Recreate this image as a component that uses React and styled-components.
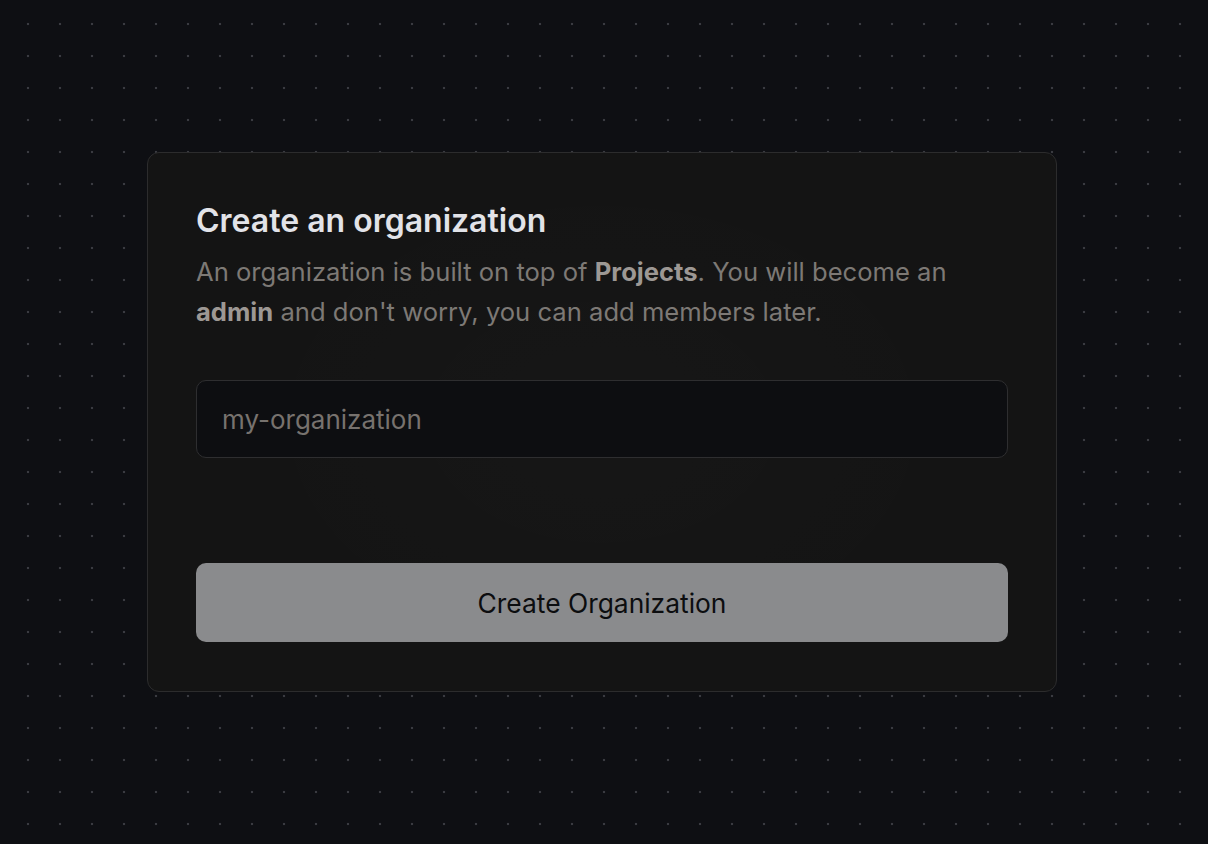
import React from "react";
import styled, { createGlobalStyle } from "styled-components";

const Global = createGlobalStyle`
  html, body { margin: 0; padding: 0; }
  body {
    background: #0e0f13;
    font-family: Inter, "Noto Sans", sans-serif;
  }
`;

const Page = styled.main`
  width: 100%;
  height: 844px;
  box-sizing: border-box;
  padding-right: 4px;
  display: flex;
  align-items: center;
  justify-content: center;
  background-color: #0e0f13;
  background-image: radial-gradient(circle, #3a3b41 1.2px, transparent 1.6px);
  background-size: 32px 32px;
  background-position: 12px 8px;
`;

const Card = styled.section`
  width: 910px;
  box-sizing: border-box;
  padding: 48px 48px 49px;
  border: 1px solid #2c2c2d;
  border-radius: 12px;
  background:
    radial-gradient(ellipse 60% 70% at 50% 50%, rgba(255,255,255,0.012), transparent 70%),
    #141414;
  display: flex;
  flex-direction: column;
`;

const Title = styled.h1`
  margin: 0;
  font-size: 32px;
  line-height: 40px;
  font-weight: 600;
  letter-spacing: 0;
  color: #e2e3e8;
`;

const Lead = styled.p`
  margin: 11px 0 0;
  font-size: 25.6px;
  line-height: 40px;
  color: #7d7975;
  b {
    font-weight: 700;
    color: #9d9894;
  }
`;

const Field = styled.input`
  margin-top: 48px;
  height: 78px;
  box-sizing: border-box;
  padding: 0 25px;
  border: 1.5px solid #2e2e30;
  border-radius: 10px;
  background: #0d0e11;
  font-family: inherit;
  font-size: 26px;
  color: #d0ccc8;
  outline: none;
  &::placeholder { color: #77726e; }
`;

const Submit = styled.button`
  margin-top: 105px;
  height: 79px;
  border: none;
  border-radius: 10px;
  background: #8a8b8d;
  color: #0c0d0f;
  font-family: inherit;
  font-size: 26.4px;
  cursor: pointer;
`;

export default function App() {
  return (
    <Page>
      <Global />
      <Card>
        <Title>Create an organization</Title>
        <Lead>
          An organization is built on top of <b>Projects</b>. You will become an{" "}
          <b>admin</b> and don't worry, you can add members later.
        </Lead>
        <Field placeholder="my-organization" />
        <Submit>Create Organization</Submit>
      </Card>
    </Page>
  );
}
